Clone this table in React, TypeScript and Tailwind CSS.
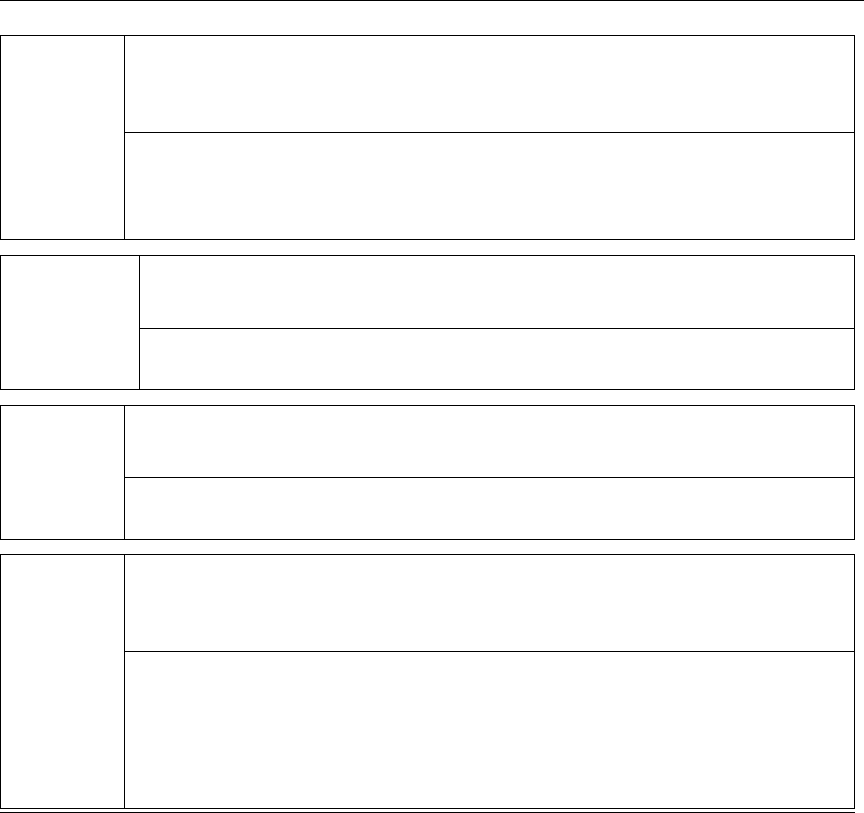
import React from "react";

interface SectionProps {
  height: string;
  labelWidth: string;
  topRow: string;
  className?: string;
}

const Section: React.FC<SectionProps> = ({ height, labelWidth, topRow, className }) => {
  return (
    <div className={`flex w-[855px] border border-black ${height} ${className ?? ""}`}>
      {/* label cell */}
      <div className={`${labelWidth} shrink-0 border-r border-black`} />
      {/* value rows */}
      <div className="flex flex-1 flex-col">
        <div className={`${topRow} shrink-0 border-b border-black`} />
        <div className="flex-1" />
      </div>
    </div>
  );
};

export default function App() {
  return (
    <div className="min-h-screen w-full bg-white font-['Liberation_Sans',sans-serif]">
      <div className="h-px w-full bg-black" />
      <Section height="h-[205px]" labelWidth="w-[124px]" topRow="h-[97px]" className="mt-[34px]" />
      <Section height="h-[135px]" labelWidth="w-[139px]" topRow="h-[73px]" className="mt-[15px]" />
      <Section height="h-[135px]" labelWidth="w-[124px]" topRow="h-[72px]" className="mt-[15px]" />
      <Section height="h-[255px]" labelWidth="w-[124px]" topRow="h-[97px]" className="mt-[14px]" />
      <div className="mt-[3px] h-[2px] w-[855px] bg-black" />
    </div>
  );
}
